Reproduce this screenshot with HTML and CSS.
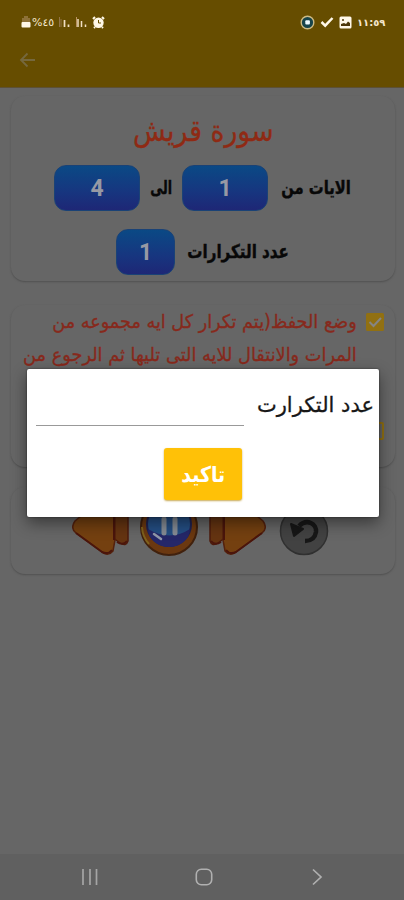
FILE: index.html
```html
<!DOCTYPE html>
<html lang="ar" dir="rtl">
<head>
<meta charset="utf-8">
<title>سورة قريش</title>
<link rel="stylesheet" href="styles.css">
</head>
<body>
<div class="screen">
  <header class="appbar">
    <div class="status" dir="ltr">
      <div class="status-left">
        <svg class="battery" width="10" height="14" viewBox="0 0 10 14"><path d="M3 1h4v2h2v5H1V3h2z" fill="#8d7138"/><rect x=".5" y="7" width="9" height="5.5" rx="1" fill="#fff8e8"/></svg>
        <span class="percent">%٤٥</span>
        <svg class="signal" width="12" height="12" viewBox="0 0 12 12"><path d="M1.5 1v10M3 3v8" stroke="#927447"/><path d="M6.5 4v7M10.5 8.500v2.500" stroke="#f1dfc3" stroke-width="1.700"/></svg>
        <svg class="signal" width="12" height="12" viewBox="0 0 12 12"><path d="M1.500 1v10" stroke="#b8905e"/><path d="M3 3v8M6.500 5v6M10.500 8.500v2.500" stroke="#f1dfc3" stroke-width="1.500"/></svg>
        <svg class="alarm" width="13" height="13" viewBox="0 0 13 13"><path d="M1 3l2-2M12 3l-2-2M2 12l1-1M11 12l-1-1" stroke="#fff8e8" stroke-width="2"/><circle cx="6.500" cy="6.700" r="5.200" fill="#fff8e8"/><path d="M6.500 4v3h2.500" fill="none" stroke="#664d00"/></svg>
      </div>
      <div class="status-right">
        <svg width="15" height="15" viewBox="0 0 15 15"><circle cx="7.500" cy="7.500" r="6.300" fill="#17444b" stroke="#cdbb85" stroke-width="1.400"/><rect x="5.300" y="5.300" width="4.600" height="4.200" rx="1" fill="#eefaff"/></svg>
        <svg width="14" height="12" viewBox="0 0 14 12"><path d="M1.500 6l3.700 3.700L12.500 2" fill="none" stroke="#fff8e8" stroke-width="2.500"/></svg>
        <svg width="13" height="13" viewBox="0 0 13 13"><rect x=".5" y=".5" width="12" height="12" rx="1.500" fill="#fff8e8"/><path d="M2 10V8l3-1 2 1 2-2.500 2 1.500v3z" fill="#4d3708"/><circle cx="4" cy="4" r="1" fill="#4d3708"/></svg>
        <span class="clock">١١:٥٩</span>
      </div>
    </div>
    <svg class="back" width="18" height="16" viewBox="0 0 18 16"><path d="M16 8H2M8.500 1.500L2 8l6.500 6.500" fill="none" stroke="#75683e" stroke-width="1.800"/></svg>
  </header>

  <main class="cards">
    <section class="card sura">
      <h1><span class="t t-title">سورة قريش</span></h1>
      <div class="row range">
        <span class="label l-from"><span class="t">الايات من</span></span>
        <span class="num">1</span>
        <span class="label l-to"><span class="t">الى</span></span>
        <span class="num">4</span>
      </div>
      <div class="row repeat">
        <span class="label l-count"><span class="t">عدد التكرارات</span></span>
        <span class="num small">1</span>
      </div>
    </section>
    <section class="card modes">
      <div class="mode">
        <svg class="check" width="18" height="18" viewBox="0 0 18 18"><rect width="18" height="18" rx="1.500" fill="#917012"/><path d="M3.500 9l4 4 7.500-8" fill="none" stroke="#858585" stroke-width="2"/></svg>
        <div class="lines">
          <p><span class="t t-one">وضع الحفظ(يتم تكرار كل ايه مجموعه من</span></p>
          <p><span class="t t-two">المرات والانتقال للايه التى تليها ثم الرجوع من</span></p>
        </div>
      </div>
      <span class="box"></span>
    </section>
    <section class="card player" dir="ltr">
      <svg width="58" height="62" viewBox="0 0 58 62"><path d="M43 7q8-5 13 2v34q-2 6-8 2l-8-6z" fill="#653411" stroke="#4d1b0c" stroke-width="1.500"/><path d="M38 5Q30-1 20 9L3 23q-5 7 1 12l26 19q6 5 11-1l2-11V10z" fill="#744010" stroke="#54210d" stroke-width="1.500"/><path d="M4 35l26 19q6 3 10-2M45 44q6 4 10-1M42 10v32" fill="none" stroke="#4b150b" stroke-width="2"/></svg>
      <svg width="60" height="62" viewBox="0 0 60 62"><circle cx="30" cy="29" r="28" fill="#6b3810" stroke="#41210d" stroke-width="2"/><path d="M3 29a27 27 0 0 0 7 17" fill="none" stroke="#80621c" stroke-width="2"/><circle cx="30" cy="26" r="22" fill="#244e83" stroke="#202250" stroke-width="2"/><path d="M9 31a21 18 0 0 0 42 0q-20 13-42 0" fill="#252769"/><path d="M25 21v14M36 21v14" stroke="#858b94" stroke-width="5" stroke-linecap="round"/><path d="M15 36l7 5" stroke="#9299ab" stroke-width="2.500" stroke-linecap="round"/></svg>
      <svg width="58" height="62" viewBox="0 0 58 62"><g transform="matrix(-1 0 0 1 58 0)"><path d="M43 7q8-5 13 2v34q-2 6-8 2l-8-6z" fill="#653411" stroke="#4d1b0c" stroke-width="1.500"/><path d="M38 5Q30-1 20 9L3 23q-5 7 1 12l26 19q6 5 11-1l2-11V10z" fill="#744010" stroke="#54210d" stroke-width="1.500"/><path d="M4 35l26 19q6 3 10-2M45 44q6 4 10-1M42 10v32" fill="none" stroke="#4b150b" stroke-width="2"/></g></svg>
      <svg class="undo" width="50" height="50" viewBox="0 0 50 50"><circle cx="25" cy="25" r="23.500" fill="#424242" stroke="#303030" stroke-width="1.500"/><path d="M20 20c8-8 18-2 17 6-1 6-5 9-11 9" fill="none" stroke="#171717" stroke-width="4.500"/><path d="M12 18l12 5-9 7z" fill="#171717" stroke="#171717" stroke-width="2" stroke-linejoin="round"/></svg>
    </section>
  </main>

  <nav class="nav" dir="ltr">
    <svg width="18" height="18" viewBox="0 0 18 18"><path d="M2 1v16M9 1v16M15.500 1v16" stroke="#a5a5a5" stroke-width="1.700"/></svg>
    <svg width="18" height="18" viewBox="0 0 18 18"><rect x="1.300" y="1.300" width="15.400" height="15.400" rx="5" fill="none" stroke="#b0b0b0" stroke-width="1.600"/></svg>
    <svg width="18" height="18" viewBox="0 0 18 18"><path d="M5 1.500L13 9l-8 7.500" fill="none" stroke="#b0b0b0" stroke-width="1.700"/></svg>
  </nav>

  <div class="dialog" role="dialog">
    <div class="field">
      <span class="field-label"><span class="t">عدد التكرارت</span></span>
      <span class="input"></span>
    </div>
    <button class="confirm"><span class="t">تاكيد</span></button>
  </div>
</div>
</body>
</html>
```
FILE: styles.css
```css
* { box-sizing: border-box; }
body { margin: 0; font-family: "DejaVu Sans", sans-serif; }
h1, p { margin: 0; font-weight: normal; }
svg { display: block; flex: none; }
.screen { position: relative; width: 404px; height: 900px; overflow: hidden; background: #666; display: flex; flex-direction: column; }
.appbar { height: 88px; background: #664d00; flex: none; border-bottom: 1px solid #5d5034; }
.status { height: 44px; padding: 0 23px 0 21px; display: flex; justify-content: space-between; align-items: center; color: #f3e6cc; }
.status-left, .status-right { display: flex; align-items: center; }
.status-left { gap: 5px; }
.battery { margin-right: -4px; }
.percent { width: 21px; font-size: 11px; white-space: nowrap; }
.status-right { gap: 5px; }
.clock { width: 24px; font-size: 10px; font-weight: bold; white-space: nowrap; letter-spacing: -.5px; }
.back { margin: 8px auto 0 0; position: relative; left: 19px; }

.cards { flex: 1; padding: 8px 9px 0 11px; }
.card { border-radius: 14px; background: #666; box-shadow: 0 1px 2px #505050; }
.t { display: inline-block; white-space: nowrap; transform-origin: 100% 50%; }
.sura { height: 185px; padding-top: 9px; }
h1 { height: 60px; line-height: 52px; font-size: 29px; color: #8f2a14; text-align: center; }
.t-title { transform-origin: 50% 50%; transform: scale(.92, 1.03); -webkit-text-stroke: .3px; }
.row { display: flex; align-items: center; }
.range { height: 46px; padding-right: 44px; }
.repeat { height: 46px; margin-top: 18px; padding-right: 106px; }
.label { font-weight: bold; font-size: 18px; color: #080808; line-height: 46px; height: 46px; flex: none; -webkit-text-stroke: .4px; }
.l-from { width: 70px; margin-left: 13px; }
.l-from .t { transform: scale(.82, 1.05); }
.l-to { width: 22px; margin: 0 10px; }
.l-to .t { transform: scale(.7, 1.05); }
.l-count { width: 104px; margin-left: 10px; }
.l-count .t { transform: scale(.84, 1.05); }
.num { width: 86px; height: 46px; flex: none; border-radius: 12px; border: 1px solid #1a4276; background: linear-gradient(#0a4985, #17357f 60%, #1e2776); color: #9799a4; font: bold 23px/46px Roboto, sans-serif; text-align: center; }
.small { width: 59px; }

.modes { height: 162px; margin-top: 24px; padding: 1px 11px 0; }
.mode { display: flex; gap: 9px; }
.check { margin-top: 7px; }
.lines { flex: 1; color: #87291c; font-size: 18px; line-height: 31px; -webkit-text-stroke: .3px; }
.lines p { height: 33px; }
.t-one { transform: scale(.98, 1.05); }
.t-two { transform: scale(.985, 1.05); }
.box { display: block; width: 18px; height: 18px; margin-top: 50px; border: 2px solid #917012; border-radius: 2px; }
.player { height: 87px; margin-top: 20px; padding: 11px 0 0 61px; display: flex; gap: 9px; }
.undo { margin: 8px 0 0 4px; }

.nav { height: 46px; flex: none; background: #606060; display: flex; align-items: center; padding-left: 81px; gap: 95.500px; }

.dialog { position: absolute; left: 27px; top: 369px; width: 352px; height: 148px; background: #fff; border-radius: 2px; box-shadow: 0 6px 16px rgba(0,0,0,.45), 0 0 2px rgba(0,0,0,.6); }
.field { display: flex; height: 79px; padding-right: 5px; }
.field-label { width: 115px; margin-left: 15px; height: 72px; font-size: 21px; line-height: 72px; color: #171717; -webkit-text-stroke: .3px; }
.input { width: 208px; height: 57px; border-bottom: 1px solid #999; }
.confirm { display: block; width: 78px; height: 52px; margin: 0 137px 0 auto; border: 0; padding: 0; border-radius: 3px; background: #ffc107; color: #fff; font: bold 20px/46px "DejaVu Sans", sans-serif; box-shadow: 0 1px 2px #c8a850; }
.confirm .t { transform: scale(.95, 1.08); transform-origin: 50% 50%; }
```
